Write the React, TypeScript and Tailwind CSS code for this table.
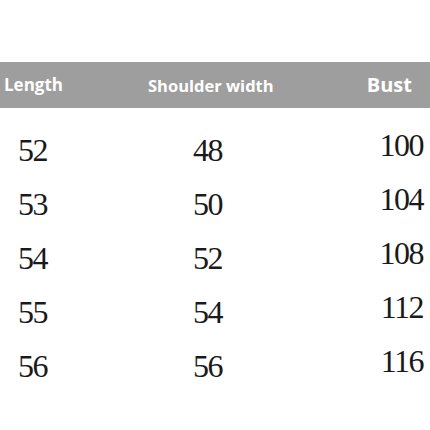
import React from 'react';

const rows = [
  { length: '52', shoulder: '48', bust: '100' },
  { length: '53', shoulder: '50', bust: '104' },
  { length: '54', shoulder: '52', bust: '108' },
  { length: '55', shoulder: '54', bust: '112' },
  { length: '56', shoulder: '56', bust: '116' },
];

export default function App() {
  return (
    <div className="w-[430px] h-[430px] bg-white overflow-hidden">
      {/* Header bar */}
      <div className="mt-[62px] h-[46px] bg-[#9e9e9e] flex items-center text-white font-bold font-['Open_Sans',sans-serif]">
        <div className="w-[148px] pl-[4px] text-[17px]">Length</div>
        <div className="flex-1 text-[16.5px] pt-[2px]">Shoulder width</div>
        <div className="pr-[18px] text-[20px] pb-[1px]">Bust</div>
      </div>

      {/* Body rows */}
      <div className="mt-[15px] font-['Liberation_Serif',serif] text-[#1a1a1a]">
        {rows.map((r) => (
          <div key={r.length} className="h-[54px] flex items-center text-[32px] leading-[54px] tracking-[-1.5px]">
            <div className="w-[193px] pl-[18px]">{r.length}</div>
            <div className="flex-1">{r.shoulder}</div>
            <div className="pr-[7px] -translate-y-[5px]">{r.bust}</div>
          </div>
        ))}
      </div>
    </div>
  );
}
